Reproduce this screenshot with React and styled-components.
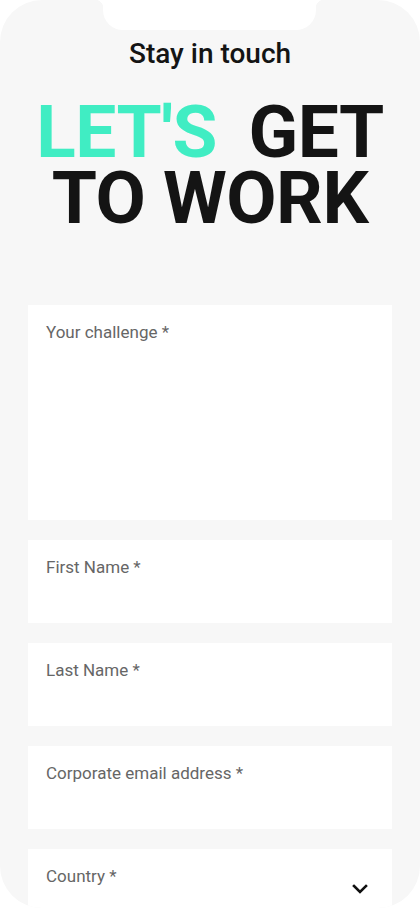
import React from "react";
import styled, { createGlobalStyle } from "styled-components";

const Global = createGlobalStyle`
  html, body { margin: 0; padding: 0; background: #ffffff; }
  * { box-sizing: border-box; }
`;

const Phone = styled.div`
  position: relative;
  width: 420px;
  height: 908px;
  border-radius: 42px;
  background: #f7f7f7;
  overflow: hidden;
  font-family: Roboto, "Liberation Sans", sans-serif;
`;

const Notch = styled.div`
  position: absolute;
  top: 0;
  left: 103px;
  width: 213px;
  height: 30px;
  background: #ffffff;
  border-radius: 0 0 20px 20px;

  &::before,
  &::after {
    content: "";
    position: absolute;
    top: 0;
    width: 8px;
    height: 8px;
  }
  &::before {
    left: -8px;
    background: radial-gradient(circle at 0 100%, transparent 8px, #ffffff 8.5px);
  }
  &::after {
    right: -8px;
    background: radial-gradient(circle at 100% 100%, transparent 8px, #ffffff 8.5px);
  }
`;

const Eyebrow = styled.h2`
  margin: 0;
  padding-top: 37px;
  text-align: center;
  font-size: 28px;
  line-height: 34px;
  font-weight: 500;
  color: #141414;
`;

const Headline = styled.h1`
  margin: 28px 0 0;
  text-align: center;
  font-size: 73px;
  line-height: 66px;
  font-weight: 700;
  letter-spacing: -0.5px;
  color: #141414;
  text-transform: uppercase;
`;

const Accent = styled.span`
  color: #40edc3;
  margin-right: 14px;
`;

const Form = styled.form`
  display: flex;
  flex-direction: column;
  gap: 20px;
  padding: 0 28px;
  margin-top: 74px;
`;

const Field = styled.label`
  position: relative;
  display: block;
  height: ${(p) => p.$h}px;
  background: #ffffff;
  padding: 17px 18px;
`;

const Label = styled.span`
  display: block;
  font-size: 17px;
  line-height: 20px;
  color: #666666;
  font-weight: 400;
`;

const Chevron = styled.svg`
  position: absolute;
  right: 24px;
  top: 35px;
  width: 16px;
  height: 10px;
`;

export default function App() {
  return (
    <>
      <Global />
      <Phone>
        <Notch />
        <Eyebrow>Stay in touch</Eyebrow>
        <Headline>
          <Accent>Let's</Accent> Get
          <br />
          To Work
        </Headline>
        <Form>
          <Field $h={215}>
            <Label>Your challenge *</Label>
          </Field>
          <Field $h={83}>
            <Label>First Name *</Label>
          </Field>
          <Field $h={83}>
            <Label>Last Name *</Label>
          </Field>
          <Field $h={83}>
            <Label>Corporate email address *</Label>
          </Field>
          <Field $h={83}>
            <Label>Country *</Label>
            <Chevron viewBox="0 0 16 10" fill="none">
              <path d="M2 2l6 6 6-6" stroke="#111" strokeWidth="2.6" strokeLinecap="square" />
            </Chevron>
          </Field>
        </Form>
      </Phone>
    </>
  );
}
